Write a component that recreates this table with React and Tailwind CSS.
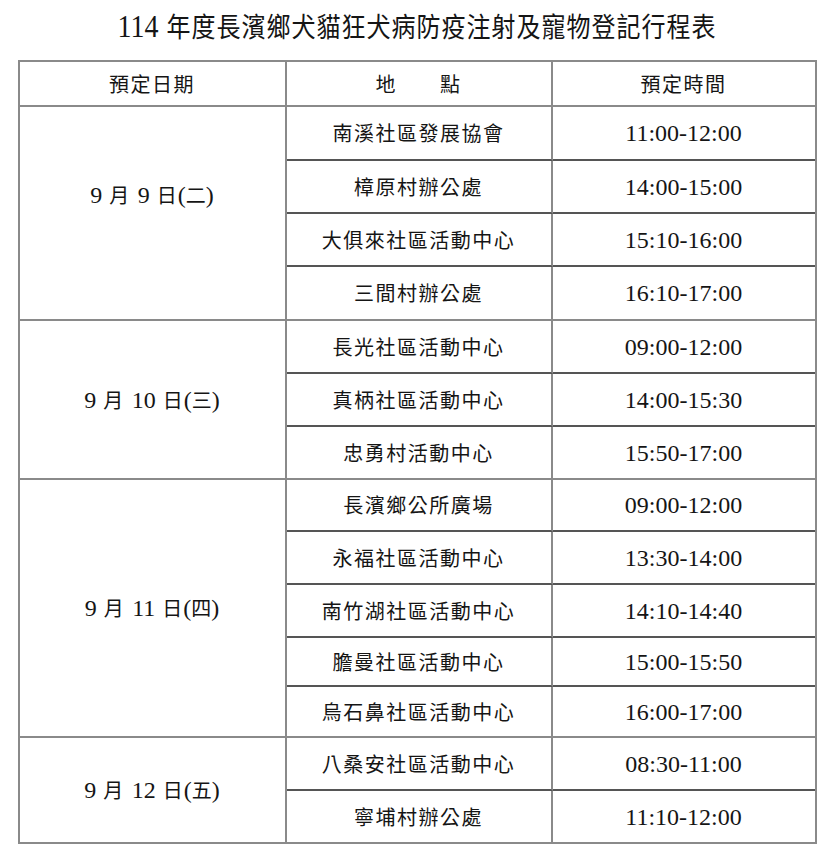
const groups = [
  {
    date: ["9", "9", "二"],
    rows: [
      ["南溪社區發展協會", "11:00-12:00"],
      ["樟原村辦公處", "14:00-15:00"],
      ["大俱來社區活動中心", "15:10-16:00"],
      ["三間村辦公處", "16:10-17:00"],
    ],
  },
  {
    date: ["9", "10", "三"],
    rows: [
      ["長光社區活動中心", "09:00-12:00"],
      ["真柄社區活動中心", "14:00-15:30"],
      ["忠勇村活動中心", "15:50-17:00"],
    ],
  },
  {
    date: ["9", "11", "四"],
    rows: [
      ["長濱鄉公所廣場", "09:00-12:00"],
      ["永福社區活動中心", "13:30-14:00"],
      ["南竹湖社區活動中心", "14:10-14:40"],
      ["膽曼社區活動中心", "15:00-15:50"],
      ["烏石鼻社區活動中心", "16:00-17:00"],
    ],
  },
  {
    date: ["9", "12", "五"],
    rows: [
      ["八桑安社區活動中心", "08:30-11:00"],
      ["寧埔村辦公處", "11:10-12:00"],
    ],
  },
];

// first date sits a bit above the middle of its block in the original
const spans = ["row-span-4 pb-[36px]", "row-span-3", "row-span-5", "row-span-2"];

const cjk = "font-['Noto_Sans_CJK_TC',sans-serif] text-[20px] tracking-[1.5px]";
const num = "font-['Liberation_Serif','Noto_Sans_CJK_TC',serif] text-[24px]";

const DateLabel = ({ d }) => (
  <div className="flex items-baseline text-[#151515]">
    <span className={num}>{d[0]}</span>
    <span className={cjk + " mx-[7px]"}>月</span>
    <span className={num}>{d[1]}</span>
    <span className={cjk + " ml-[7px] mr-[1px] tracking-normal"}>日</span>
    <span className={num}>(</span>
    <span className={cjk + " tracking-normal"}>{d[2]}</span>
    <span className={num}>)</span>
  </div>
);

export default function App() {
  return (
    <div className="w-[834px] h-[852px] bg-white">
      <div className="h-[60px] flex items-center justify-center pb-[6px] text-[#151515]">
        <h1 className="flex items-baseline scale-y-[1.15]">
          <span className="font-['Liberation_Serif',serif] text-[28px] mr-[8px]">114</span>
          <span className="font-['Noto_Sans_CJK_TC',sans-serif] text-[24px] tracking-[1px]">
            年度長濱鄉犬貓狂犬病防疫注射及寵物登記行程表
          </span>
        </h1>
      </div>

      <div className="mx-auto w-[799px] border-2 border-[#8a8a8a] grid grid-cols-[267px_266px_262px] grid-rows-[45px_54px_53px_53px_54px_53px_53px_53px_52px_53px_53px_49px_51px_53px_51px]">
        <div className={"flex items-center justify-center border-r-2 border-b-2 border-[#8a8a8a] text-[#151515] " + cjk}>
          預定日期
        </div>
        <div className={"flex items-center justify-center border-r-2 border-b-2 border-[#8a8a8a] text-[#151515] " + cjk}>
          地　　點
        </div>
        <div className={"flex items-center justify-center border-b-2 border-[#8a8a8a] text-[#151515] " + cjk}>
          預定時間
        </div>

        {groups.map((g, gi) => {
          const lastGroup = gi === groups.length - 1;
          return [
            <div
              key={"d" + gi}
              className={
                spans[gi] +
                " flex items-center justify-center border-r-2 border-[#8a8a8a] " +
                (lastGroup ? "" : "border-b-2")
              }
            >
              <DateLabel d={g.date} />
            </div>,
            ...g.rows.flatMap(([place, time], ri) => {
              const lastRow = ri === g.rows.length - 1;
              const bottom = lastRow
                ? lastGroup
                  ? ""
                  : "border-b-2 border-b-[#8a8a8a]"
                : "border-b-2 border-b-[#555555]";
              return [
                <div
                  key={"p" + gi + ri}
                  className={
                    "flex items-center justify-center border-r-2 border-r-[#8a8a8a] text-[#151515] " +
                    bottom +
                    " " +
                    cjk
                  }
                >
                  {place}
                </div>,
                <div
                  key={"t" + gi + ri}
                  className={
                    "flex items-center justify-center text-[#151515] " + bottom + " " + num
                  }
                >
                  {time}
                </div>,
              ];
            }),
          ];
        })}
      </div>
    </div>
  );
}
